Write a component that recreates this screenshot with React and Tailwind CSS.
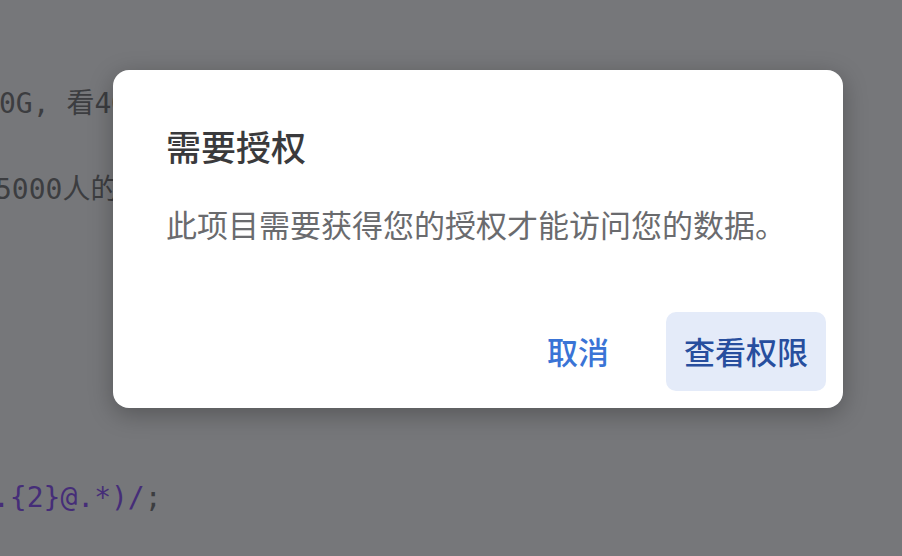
export default function App() {
  return (
    <div className="relative w-[902px] h-[556px] overflow-hidden bg-[#76777a]">
      <div className="pt-[84px] text-[28px] leading-[40px] text-[#3c3d40] whitespace-pre" style={{ fontFamily: '"DejaVu Sans Mono", "Noto Sans CJK SC", monospace' }}>
        <div className="-ml-[1px]">0G, 看4G，然后</div>
        <div className="mt-[46px] -ml-[5px]">5000人的数据</div>
        <div className="mt-[268px] -ml-[7px]">
          <span className="text-[#452d78]">.{'{'}2{'}'}@.*)/</span>
          <span>;</span>
        </div>
      </div>

      <div
        className="absolute left-[113px] top-[70px] w-[730px] h-[338px] rounded-2xl bg-white shadow-[0_6px_24px_rgba(0,0,0,0.28)] flex flex-col"
        style={{ fontFamily: '"Noto Sans CJK SC", "Noto Sans", sans-serif' }}
      >
        <div className="pl-[53px] pr-[30px] pt-[53px]">
          <div className="text-[35px] leading-[45px] font-medium text-[#3a3a3c]">需要授权</div>
          <div className="mt-[36px] text-[31px] leading-[40px] text-[#6a6b6e] whitespace-nowrap">此项目需要获得您的授权才能访问您的数据。</div>
        </div>
        <div className="mt-auto flex justify-end items-center gap-[39px] px-[17px] pb-[17px]">
          <button className="h-[79px] px-[18px] rounded-[10px] text-[31px] font-medium text-[#3a74d6]">取消</button>
          <button className="h-[79px] px-[18px] rounded-[10px] bg-[#e4ebf9] text-[31px] font-medium text-[#274e9e]">查看权限</button>
        </div>
      </div>
    </div>
  );
}
